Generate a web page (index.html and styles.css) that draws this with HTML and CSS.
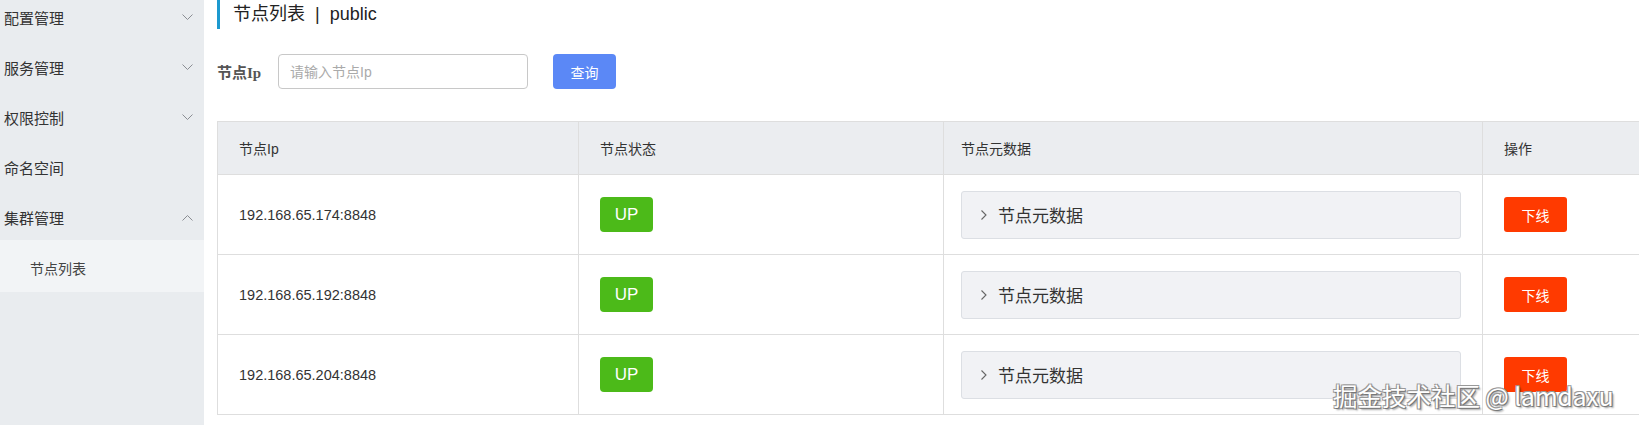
FILE: index.html
```html
<!DOCTYPE html>
<html lang="zh-CN">
<head>
<meta charset="utf-8">
<title>节点列表</title>
<link rel="stylesheet" href="styles.css">
</head>
<body>
<div class="app">
  <aside class="sidebar">
    <ul class="menu">
      <li class="menu-item"><span>配置管理</span><svg class="chev" width="11" height="7" viewBox="0 0 11 7"><polyline points="0.5,0.5 5.5,5.5 10.5,0.5"/></svg></li>
      <li class="menu-item"><span>服务管理</span><svg class="chev" width="11" height="7" viewBox="0 0 11 7"><polyline points="0.5,0.5 5.5,5.5 10.5,0.5"/></svg></li>
      <li class="menu-item"><span>权限控制</span><svg class="chev" width="11" height="7" viewBox="0 0 11 7"><polyline points="0.5,0.5 5.5,5.5 10.5,0.5"/></svg></li>
      <li class="menu-item"><span>命名空间</span></li>
      <li class="menu-item"><span>集群管理</span><svg class="chev" width="11" height="7" viewBox="0 0 11 7"><polyline points="0.5,6.5 5.5,1.5 10.5,6.5"/></svg></li>
      <li class="submenu-item"><span>节点列表</span></li>
    </ul>
  </aside>
  <main class="main">
    <div class="page-title">节点列表&nbsp;&nbsp;|&nbsp;&nbsp;public</div>
    <form class="search">
      <label class="search-label">节点Ip</label>
      <input class="search-input" type="text" placeholder="请输入节点Ip">
      <button class="btn-query" type="button">查询</button>
    </form>
    <table class="grid">
      <colgroup>
        <col class="c1"><col class="c2"><col class="c3"><col class="c4">
      </colgroup>
      <thead>
        <tr><th>节点Ip</th><th>节点状态</th><th class="meta">节点元数据</th><th>操作</th></tr>
      </thead>
      <tbody>
        <tr>
          <td class="ip">192.168.65.174:8848</td>
          <td><span class="badge-up">UP</span></td>
          <td class="meta"><div class="collapse"><svg class="arrow" width="6" height="10" viewBox="0 0 6 10"><polyline points="0.5,0.5 5,5 0.5,9.5"/></svg><span>节点元数据</span></div></td>
          <td><button class="btn-off" type="button">下线</button></td>
        </tr>
        <tr>
          <td class="ip">192.168.65.192:8848</td>
          <td><span class="badge-up">UP</span></td>
          <td class="meta"><div class="collapse"><svg class="arrow" width="6" height="10" viewBox="0 0 6 10"><polyline points="0.5,0.5 5,5 0.5,9.5"/></svg><span>节点元数据</span></div></td>
          <td><button class="btn-off" type="button">下线</button></td>
        </tr>
        <tr>
          <td class="ip">192.168.65.204:8848</td>
          <td><span class="badge-up">UP</span></td>
          <td class="meta"><div class="collapse"><svg class="arrow" width="6" height="10" viewBox="0 0 6 10"><polyline points="0.5,0.5 5,5 0.5,9.5"/></svg><span>节点元数据</span></div></td>
          <td><button class="btn-off" type="button">下线</button></td>
        </tr>
      </tbody>
    </table>
  </main>
</div>
<div class="watermark">掘金技术社区 @ lamdaxu</div>
</body>
</html>
```
FILE: styles.css
```css
* { box-sizing: border-box; }
html, body {
  margin: 0;
  padding: 0;
  height: 100%;
  overflow: hidden;
  background: #fff;
  font-family: "Liberation Sans", "Noto Sans CJK SC", sans-serif;
  color: #333;
}
.app {
  display: flex;
  height: 425px;
}
.sidebar {
  width: 204px;
  flex: 0 0 204px;
  background: #e9ecef;
  overflow: hidden;
}
.menu {
  list-style: none;
  margin: -8px 0 0 0;
  padding: 0;
}
.menu-item {
  height: 50px;
  display: flex;
  align-items: center;
  justify-content: space-between;
  padding: 0 11px 0 4px;
  font-size: 15px;
  color: #333;
}
.chev polyline {
  fill: none;
  stroke: #8a8d92;
  stroke-width: 1;
}
.submenu-item {
  height: 52px;
  margin-top: -2px;
  display: flex;
  align-items: center;
  padding-left: 30px;
  padding-top: 4px;
  font-size: 14px;
  color: #444;
  background: #f2f4f6;
}
.main {
  flex: 1;
  min-width: 0;
  padding-left: 13px;
  overflow: hidden;
}
.page-title {
  height: 29px;
  line-height: 29px;
  border-left: 3px solid #1d99cf;
  padding-left: 13px;
  font-size: 18px;
  color: #222;
}
.search {
  margin: 25px 0 0 0;
  display: flex;
  align-items: center;
  height: 35px;
}
.search-label {
  font-family: "Liberation Serif", "Noto Sans CJK SC", serif;
  font-weight: bold;
  font-size: 15px;
  color: #555;
  width: 61px;
}
.search-input {
  width: 250px;
  height: 35px;
  border: 1px solid #c8c8c8;
  border-radius: 4px;
  padding: 0 11px;
  font-size: 14px;
  font-family: "Liberation Sans", "Noto Sans CJK SC", sans-serif;
  outline: none;
}
.search-input::placeholder { color: #aaa; }
.btn-query {
  margin-left: 25px;
  width: 63px;
  height: 35px;
  border: none;
  border-radius: 4px;
  background: #5b88f6;
  color: #fff;
  font-size: 14px;
  font-family: "Liberation Sans", "Noto Sans CJK SC", sans-serif;
}
.grid {
  margin-top: 32px;
  width: 1430px;
  border-collapse: collapse;
  table-layout: fixed;
  border: 1px solid #dedede;
}
.c1 { width: 361px; }
.c2 { width: 365px; }
.c3 { width: 539px; }
.c4 { width: 165px; }
.grid th {
  height: 53px;
  background: #ebedf0;
  text-align: left;
  font-weight: normal;
  font-size: 14px;
  color: #333;
  padding: 0 0 0 21px;
  border: 1px solid #dedede;
}
.grid td {
  height: 80px;
  padding: 0 0 0 21px;
  border: 1px solid #dedede;
  vertical-align: middle;
}
.grid th.meta,
.grid td.meta {
  padding-left: 17px;
}
.grid td.ip {
  font-size: 14.5px;
  color: #333;
}
.badge-up {
  display: inline-flex;
  align-items: center;
  justify-content: center;
  width: 53px;
  height: 35px;
  border-radius: 4px;
  background: #4cba19;
  color: #fff;
  font-size: 17px;
}
.collapse {
  width: 500px;
  height: 48px;
  background: #f1f2f5;
  border: 1px solid #dcdfe4;
  border-radius: 3px;
  display: flex;
  align-items: center;
  padding-left: 19px;
  font-size: 17px;
  color: #333;
  font-family: "Noto Sans CJK SC", sans-serif;
}
.arrow {
  margin-right: 11px;
}
.arrow polyline {
  fill: none;
  stroke: #666;
  stroke-width: 1.1;
}
.btn-off {
  width: 63px;
  height: 35px;
  border: none;
  border-radius: 3px;
  background: #ff3a00;
  color: #fff;
  font-size: 14px;
  font-family: "Liberation Sans", "Noto Sans CJK SC", sans-serif;
}
.watermark {
  position: absolute;
  left: 1333px;
  top: 378px;
  font-size: 24.5px;
  font-family: "Noto Sans CJK SC", sans-serif;
  color: #fff;
  white-space: nowrap;
  text-shadow: 1px 1px 0 #777, -1px -1px 0 #999, 1px -1px 0 #999, -1px 1px 0 #999, 2px 2px 2px rgba(0,0,0,0.4);
}
```
